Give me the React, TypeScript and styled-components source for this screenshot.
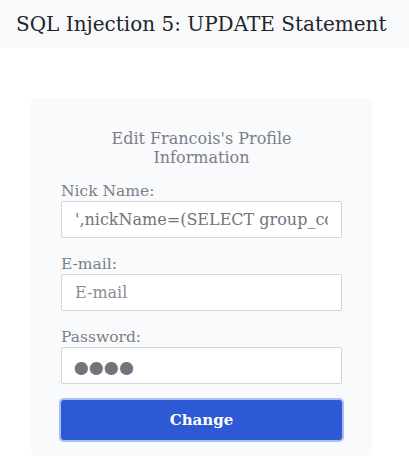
import React from "react";
import styled, { createGlobalStyle } from "styled-components";

const GlobalStyle = createGlobalStyle`
  body {
    margin: 0;
    background: #ffffff;
    font-family: "DejaVu Serif", serif;
  }
`;

const Header = styled.header`
  height: 48px;
  display: flex;
  align-items: center;
  padding-left: 16px;
  background-color: #f8f9fb;
  color: #222428;
  font-size: 20px;
`;

const Card = styled.form`
  width: 341px;
  box-sizing: border-box;
  margin: 50px 0 0 31px;
  padding: 31px 30px 16px;
  background-color: #f9fafc;
  border-radius: 4px;
  display: flex;
  flex-direction: column;
`;

const Title = styled.div`
  text-align: center;
  color: #7b7e86;
  font-size: 16px;
  line-height: 19px;
  margin: 0 auto 14px;
  width: 250px;
`;

const Field = styled.label`
  display: flex;
  flex-direction: column;
  margin-bottom: 16px;
`;

const LabelText = styled.span`
  color: #7b7e86;
  font-size: 15.5px;
  line-height: 20px;
`;

const Input = styled.input<{ $secret?: boolean }>`
  height: 37px;
  box-sizing: border-box;
  border: 1px solid #d3d5da;
  border-radius: 2px;
  background: #ffffff;
  padding: ${(p) => (p.$secret ? "8px 13px 0 6px" : "0 13px")};
  font-family: "DejaVu Serif", serif;
  font-size: ${(p) => (p.$secret ? "45px" : "16px")};
  letter-spacing: ${(p) => (p.$secret ? "-11.5px" : "normal")};
  color: #71747b;

  &::placeholder {
    color: #8a8d94;
  }
`;

const Button = styled.button`
  height: 40px;
  margin: 0;
  border: none;
  border-radius: 3px;
  background-color: #2d59d4;
  box-shadow: 0 0 0 2px #a9bdf0;
  color: #ffffff;
  font-family: "DejaVu Serif", serif;
  font-weight: bold;
  font-size: 15px;
`;

export default function App() {
  return (
    <>
      <GlobalStyle />
      <Header>SQL Injection 5: UPDATE Statement</Header>
      <Card onSubmit={(e) => e.preventDefault()}>
        <Title>Edit Francois's Profile Information</Title>
        <Field>
          <LabelText>Nick Name:</LabelText>
          <Input
            type="text"
            defaultValue="',nickName=(SELECT group_concat(password) FROM users),email='"
          />
        </Field>
        <Field>
          <LabelText>E-mail:</LabelText>
          <Input type="text" placeholder="E-mail" />
        </Field>
        <Field>
          <LabelText>Password:</LabelText>
          <Input type="password" $secret defaultValue="test" />
        </Field>
        <Button type="submit">Change</Button>
      </Card>
    </>
  );
}
